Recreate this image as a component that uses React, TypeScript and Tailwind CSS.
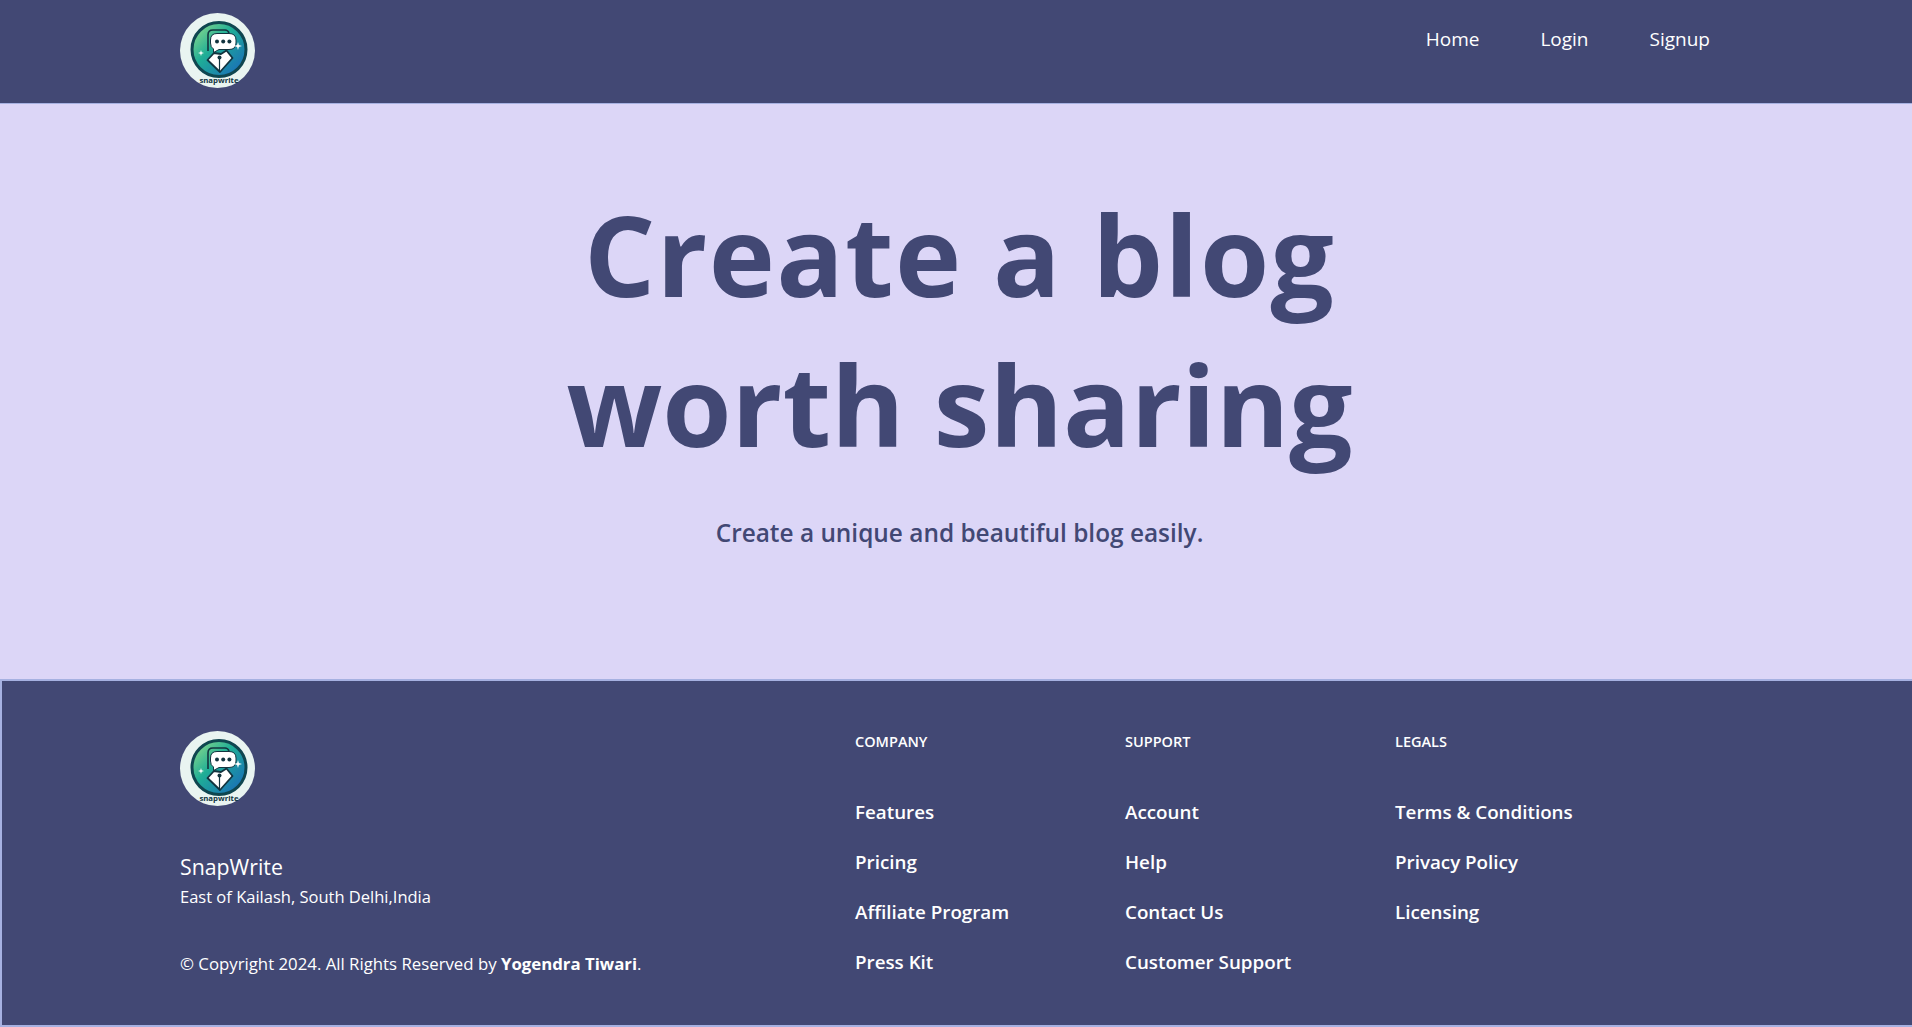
import React from 'react';

const font = "[font-family:'Open_Sans','Noto_Sans',sans-serif]";

const columns = [
  { title: 'Company', links: ['Features', 'Pricing', 'Affiliate Program', 'Press Kit'] },
  { title: 'Support', links: ['Account', 'Help', 'Contact Us', 'Customer Support'] },
  { title: 'Legals', links: ['Terms & Conditions', 'Privacy Policy', 'Licensing'] },
];

// logo is a picture in the original, redrawn here
const Logo: React.FC<{ id: string }> = ({ id }) => (
  <svg viewBox="0 0 75 75" className="block h-[75px] w-[75px]">
    <defs>
      <linearGradient id={id} x1="0.1" y1="0.1" x2="0.9" y2="0.9">
        <stop offset="0" stopColor="#7fd48c" />
        <stop offset="0.4" stopColor="#1fae96" />
        <stop offset="1" stopColor="#1a6fb8" />
      </linearGradient>
    </defs>
    <circle cx="37.5" cy="37.5" r="37.5" fill="#e9f4f1" />
    <circle cx="39" cy="36.5" r="27" fill={`url(#${id})`} stroke="#0f4650" strokeWidth="3" />
    <path d="M28 38 v-16 q0 -5 5 -5 h12 q3 0 4 3" fill="none" stroke="#12343f" strokeWidth="1.600" />
    <path d="M30.500 27 q0 -6.500 6.500 -6.500 h12 q7 0 7 6.500 v3 q0 6.500 -7 6.500 h-10 l-5.500 3 v-3.500 q-3 -1.500 -3 -6 z" fill="#ffffff" stroke="#12343f" strokeWidth="1" />
    <circle cx="37" cy="28.500" r="2" fill="#12343f" />
    <circle cx="43.200" cy="28.500" r="2" fill="#12343f" />
    <circle cx="49.400" cy="28.500" r="2" fill="#12343f" />
    <path d="M34 40 L27.500 47 L40 59 L52.500 45 L46.500 37.500 L41 41 Z" fill="#ffffff" stroke="#12343f" strokeWidth="1.800" strokeLinejoin="round" />
    <path d="M39.500 44 V58" stroke="#12343f" strokeWidth="1.200" />
    <circle cx="39.500" cy="44.500" r="2" fill="#12343f" />
    <path d="M58 29 l.9 3.100 l3.100 .9 l-3.100 .9 l-.9 3.100 l-.9 -3.100 l-3.100 -.9 l3.100 -.9 z" fill="#ffffff" />
    <path d="M21 37 l.7 2.300 l2.300 .7 l-2.300 .7 l-.7 2.300 l-.7 -2.300 l-2.300 -.7 l2.300 -.7 z" fill="#ffffff" />
    <text x="39" y="69.500" textAnchor="middle" fontSize="7.800" fontWeight="700" fontFamily="'Open Sans', sans-serif" fill="#12343f">snapwrite</text>
  </svg>
);

export default function App() {
  return (
    <div className={`${font} flex min-h-[1027px] flex-col bg-[#dcd6f7]`}>
      {/* Navbar */}
      <header className="flex h-[104px] items-start justify-between border-b border-b-[#a6b1e1] bg-[#424874] pl-[180px] pr-[202px] pt-[13px]">
        <Logo id="logo-top" />
        <nav className="flex gap-[61px] pt-[13px] text-[19px] leading-[26px] text-white">
          <a href="#">Home</a>
          <a href="#">Login</a>
          <a href="#">Signup</a>
        </nav>
      </header>

      {/* Hero */}
      <main className="flex h-[575px] flex-col items-center pl-[7px] pt-[75px] text-[#424874]">
        <h1 className="text-center text-[112px] font-bold leading-[150px]">
          <span className="tracking-[1.300px]">Create a blog</span>
          <br />
          worth sharing
        </h1>
        <p className="mt-[37px] text-[24.400px] font-semibold leading-[34px]">
          Create a unique and beautiful blog easily.
        </p>
      </main>

      {/* Footer */}
      <footer className="flex h-[348px] border-y-2 border-l-2 border-y-[#a6b1e1] border-l-[#a6b1e1] bg-[#424874] pl-[178px] pt-[50px] text-white">
        <div className="w-[675px]">
          <Logo id="logo-footer" />
          <p className="mt-[46px] text-[21.300px] leading-[30px]">SnapWrite</p>
          <p className="mt-[3px] text-[16.500px] leading-[24px]">East of Kailash, South Delhi,India</p>
          <p className="mt-[43px] text-[16.800px] leading-[24px]">
            © Copyright 2024. All Rights Reserved by <span className="font-bold">Yogendra Tiwari</span>.
          </p>
        </div>
        {columns.map((col) => (
          <div key={col.title} className="w-[270px]">
            <h3 className="mt-[1px] text-[14.500px] font-semibold uppercase leading-[20px]">{col.title}</h3>
            <ul className="mt-[46px] flex flex-col gap-[22px]">
              {col.links.map((link) => (
                <li key={link} className="text-[18.800px] font-semibold leading-[28px]">
                  <a href="#">{link}</a>
                </li>
              ))}
            </ul>
          </div>
        ))}
      </footer>
    </div>
  );
}
